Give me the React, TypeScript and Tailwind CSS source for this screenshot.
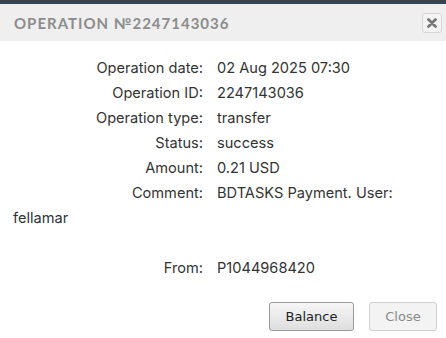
const rows: [string, string][] = [
  ['Operation date:', '02 Aug 2025 07:30'],
  ['Operation ID:', '2247143036'],
  ['Operation type:', 'transfer'],
  ['Status:', 'success'],
  ['Amount:', '0.21 USD'],
]

export default function App() {
  return (
    <div className="w-[446px] h-[338px] bg-white overflow-hidden flex flex-col font-['Inter',sans-serif] text-[#333] text-[14.6px]">
      <div className="h-[4px] bg-[#37444e]" />

      {/* шапка */}
      <div className="h-[37px] bg-[#efefef] flex items-center justify-between pl-[14px] pr-[4px]">
        <h1 className="font-['Lato',sans-serif] font-bold text-[15px] tracking-[1px] text-[#8c8c8c] pt-[2px]">
          OPERATION №2247143036
        </h1>
        <button className="w-[20px] h-[20px] rounded-[3px] border border-[#d6d6d6] bg-[#f4f4f4] flex items-center justify-center">
          <svg width="10" height="10" viewBox="0 0 10 10">
            <path d="M1.5 1.5 L8.5 8.5 M8.5 1.5 L1.5 8.5" stroke="#767676" strokeWidth="2.8" strokeLinecap="round" />
          </svg>
        </button>
      </div>

      {/* данные */}
      <div className="px-[13px] pt-[15px] leading-[25px]">
        {rows.map(([label, value]) => (
          <div key={label}>
            <span className="inline-block w-[190px] text-right mr-[14px]">{label}</span>
            {value}
          </div>
        ))}
        <div>
          <span className="inline-block w-[190px] text-right mr-[14px]">Comment:</span>
          BDTASKS Payment. User:
          <br />
          fellamar
        </div>
        <div className="mt-[25px]">
          <span className="inline-block w-[190px] text-right mr-[14px]">From:</span>
          P1044968420
        </div>
      </div>

      {/* кнопки */}
      <div className="flex justify-end gap-[15px] pr-[9px] mt-[21px] font-['DejaVu_Sans',sans-serif] text-[13px]">
        <button className="w-[85px] h-[29px] rounded-[3px] border border-[#9a9a9a] bg-gradient-to-b from-[#f6f6f6] to-[#dedede] text-[#222]">
          Balance
        </button>
        <button className="w-[68px] h-[29px] rounded-[3px] border border-[#cfcfcf] bg-[#f3f3f3] text-[#8a8a8a]">
          Close
        </button>
      </div>
    </div>
  )
}
